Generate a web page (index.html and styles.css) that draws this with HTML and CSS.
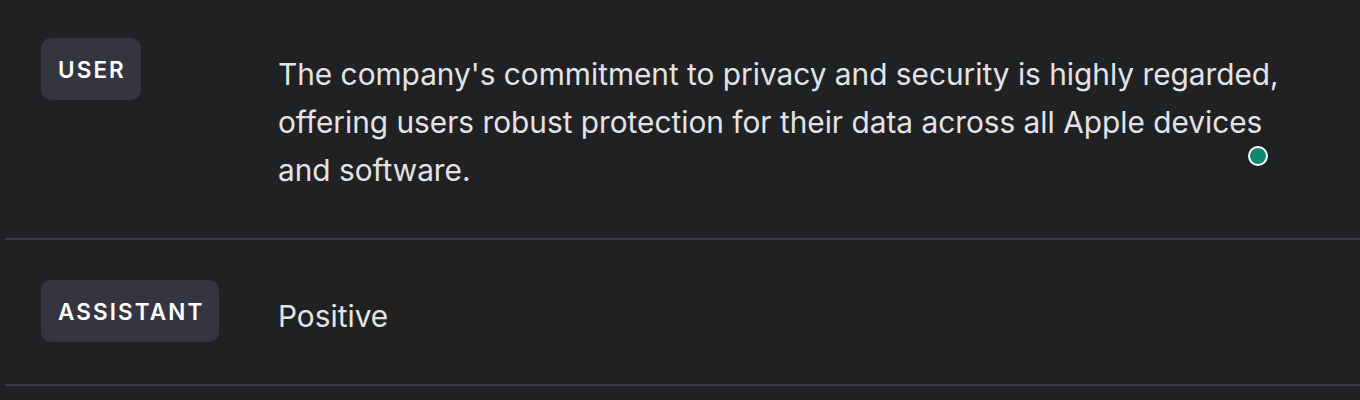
FILE: index.html
```html
<!DOCTYPE html>
<html>
<head>
<meta charset="utf-8">
<link rel="stylesheet" href="styles.css">
</head>
<body>
<div class="thread">
  <div class="row row-first">
    <div class="role"><span class="badge">USER</span></div>
    <div class="message">The company's commitment to privacy and security is highly regarded, offering users robust protection for their data across all Apple devices and software.</div>
  </div>
  <div class="row">
    <div class="role"><span class="badge">ASSISTANT</span></div>
    <div class="message">Positive</div>
  </div>
  <span class="cursor-dot"></span>
</div>
</body>
</html>
```
FILE: styles.css
```css
html, body {
  margin: 0;
  padding: 0;
  background: #202123;
  height: 100%;
  overflow: hidden;
}
.thread {
  position: relative;
  padding-left: 5px;
  font-family: Inter, "Noto Sans", sans-serif;
}
.row {
  display: flex;
  align-items: flex-start;
  padding: 40px 0 40px 36px;
  border-bottom: 2px solid #383943;
}
.row-first {
  padding-top: 38px;
}
.role {
  width: 237px;
  flex-shrink: 0;
}
.badge {
  display: inline-flex;
  align-items: center;
  height: 62px;
  box-sizing: border-box;
  padding: 0 15px 0 17px;
  border-radius: 10px;
  background: #343541;
  color: #ffffff;
  font-size: 22.5px;
  font-weight: 600;
  letter-spacing: 2.1px;
}
.message {
  margin: 12px 0 4px;
  color: #e3e3e8;
  font-size: 29.8px;
  line-height: 48px;
  width: 1012px;
}
.cursor-dot {
  position: absolute;
  left: 1248px;
  top: 146px;
  width: 16px;
  height: 16px;
  border-radius: 50%;
  background: #0f8a70;
  border: 2px solid #ffffff;
}
```
